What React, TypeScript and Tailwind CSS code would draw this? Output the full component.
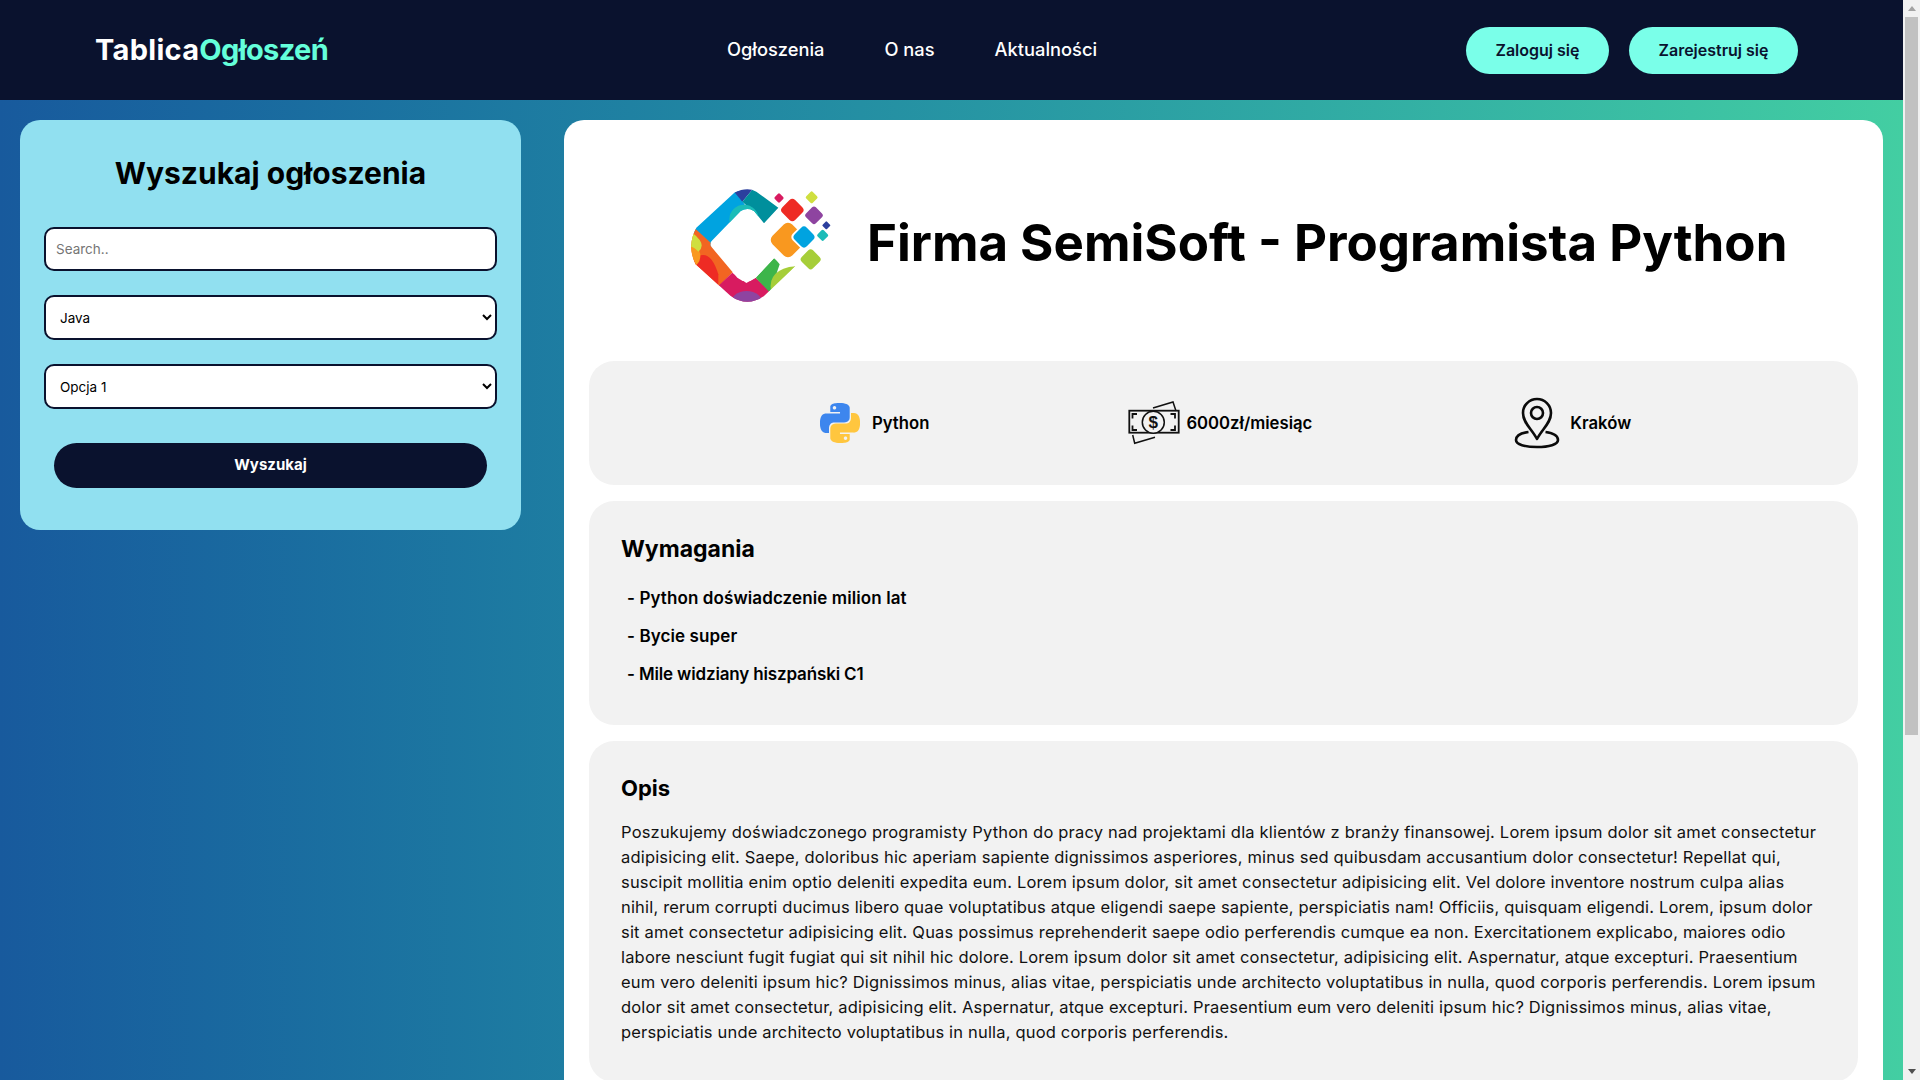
const font = { fontFamily: 'Inter, "Noto Sans", sans-serif' };

const paragraph = [
  'Poszukujemy doświadczonego programisty Python do pracy nad projektami dla klientów z branży finansowej. Lorem ipsum dolor sit amet consectetur',
  'adipisicing elit. Saepe, doloribus hic aperiam sapiente dignissimos asperiores, minus sed quibusdam accusantium dolor consectetur! Repellat qui,',
  'suscipit mollitia enim optio deleniti expedita eum. Lorem ipsum dolor, sit amet consectetur adipisicing elit. Vel dolore inventore nostrum culpa alias',
  'nihil, rerum corrupti ducimus libero quae voluptatibus atque eligendi saepe sapiente, perspiciatis nam! Officiis, quisquam eligendi. Lorem, ipsum dolor',
  'sit amet consectetur adipisicing elit. Quas possimus reprehenderit saepe odio perferendis cumque ea non. Exercitationem explicabo, maiores odio',
  'labore nesciunt fugit fugiat qui sit nihil hic dolore. Lorem ipsum dolor sit amet consectetur, adipisicing elit. Aspernatur, atque excepturi. Praesentium',
  'eum vero deleniti ipsum hic? Dignissimos minus, alias vitae, perspiciatis unde architecto voluptatibus in nulla, quod corporis perferendis. Lorem ipsum',
  'dolor sit amet consectetur, adipisicing elit. Aspernatur, atque excepturi. Praesentium eum vero deleniti ipsum hic? Dignissimos minus, alias vitae,',
  'perspiciatis unde architecto voluptatibus in nulla, quod corporis perferendis.',
];

function Diamond({ cx, cy, r, fill, rx = 6 }: { cx: number; cy: number; r: number; fill: string; rx?: number }) {
  const s = r * 1.55;
  return <rect x={cx - s / 2} y={cy - s / 2} width={s} height={s} rx={rx} fill={fill} transform={`rotate(45 ${cx} ${cy})`} />;
}

function CompanyLogo() {
  const c = 'M358 140 L292 92 Q265 76 226 95 L112 200 Q82 255 110 310 L215 405 Q265 440 315 405 L410 315 Q375 320 345 292 L290 350 Q262 372 235 350 L155 255 Q152 245 160 238 L245 150 Q265 138 285 150 L315 187 Z';
  return (
    <svg viewBox="0 0 600 480" className="w-[200px] h-[160px] shrink-0">
      <defs>
        <clipPath id="cshape">
          <path d={c} />
        </clipPath>
      </defs>
      <g clipPath="url(#cshape)">
        <polygon points="80,200 230,70 250,120 270,150 155,260" fill="#00a3e0" />
        <polygon points="215,80 285,80 250,122" fill="#2b3f9e" />
        <polygon points="250,122 285,80 370,130 315,190 270,140" fill="#008f9c" />
        <circle cx="255" cy="175" r="44" fill="#1bbcb8" />
        <polygon points="100,195 155,245 225,330 175,380 80,320" fill="#f26522" />
        <path d="M100 300 Q150 250 178 340 L178 378 L100 320 Z" fill="#ee2b24" />
        <circle cx="88" cy="285" r="36" fill="#f9981f" />
        <path d="M100 215 Q145 250 118 272 Q100 252 85 258 Z" fill="#cfdf3f" />
        <polygon points="220,335 262,366 290,350 340,395 265,445 175,377" fill="#d81b60" />
        <ellipse cx="263" cy="432" rx="50" ry="42" fill="#8e44a0" />
        <polygon points="290,350 346,290 362,310 333,395" fill="#3db54a" />
        <path d="M336 390 Q325 325 410 315 Z" fill="#a6ce39" />
      </g>
      <Diamond cx={360} cy={111} r={14} fill="#d81b60" rx={4} />
      <Diamond cx={400} cy={147} r={35} fill="#ee2b24" rx={12} />
      <Diamond cx={458} cy={109} r={18} fill="#cfdf3f" rx={5} />
      <Diamond cx={465} cy={163} r={27} fill="#8e44a0" rx={8} />
      <Diamond cx={502} cy={193} r={12} fill="#2b3f9e" rx={3} />
      <Diamond cx={491} cy={223} r={17} fill="#1bbcb8" rx={5} />
      <Diamond cx={387} cy={237} r={54} fill="#f9981f" rx={18} />
      <Diamond cx={435} cy={228} r={40} fill="#ffffff" rx={14} />
      <Diamond cx={435} cy={228} r={33} fill="#00a3e0" rx={12} />
      <Diamond cx={455} cy={295} r={31} fill="#a6ce39" rx={10} />
    </svg>
  );
}

function PythonIcon() {
  return (
    <svg viewBox="0 0 24 24" className="w-10 h-10 shrink-0" fillRule="evenodd">
      <path fill="#3d86ee" d="M14.25.18l.9.2.73.26.59.3.45.32.34.34.25.34.16.33.1.3.04.26.02.2-.01.13V8.5l-.05.63-.13.55-.21.46-.26.38-.3.31-.33.25-.35.19-.35.14-.33.1-.3.07-.26.04-.21.02H8.77l-.69.05-.59.14-.5.22-.41.27-.33.32-.27.35-.2.36-.15.37-.1.35-.07.32-.04.27-.02.21v3.06H3.17l-.21-.03-.28-.07-.32-.12-.35-.18-.36-.26-.36-.36-.35-.46-.32-.59-.28-.73-.21-.88-.14-1.05-.05-1.23.06-1.22.16-1.04.24-.87.32-.71.36-.57.4-.44.42-.33.42-.24.4-.16.36-.1.32-.05.24-.01h.16l.06.01h8.16v-.83H6.18l-.01-2.75-.02-.37.05-.34.11-.31.17-.28.25-.26.31-.23.38-.2.44-.18.51-.15.58-.12.64-.1.71-.06.77-.04.84-.02 1.27.05zM7.95 2.16l-.23.33-.08.41.08.41.23.34.33.22.41.09.41-.09.33-.22.23-.34.08-.41-.08-.41-.23-.33-.33-.22-.41-.09-.41.09z" />
      <path fill="#ffc63f" d="M21.04 6.11l.28.06.32.12.35.18.36.27.36.35.35.47.32.59.28.73.21.88.14 1.04.05 1.23-.06 1.23-.16 1.04-.24.86-.32.71-.36.57-.4.45-.42.33-.42.24-.4.16-.36.09-.32.05-.24.02-.16-.01h-8.22v.82h5.84l.01 2.76.02.36-.05.34-.11.31-.17.29-.25.25-.31.24-.38.2-.44.17-.51.15-.58.13-.64.09-.71.07-.77.04-.84.01-1.27-.04-1.07-.14-.9-.2-.73-.25-.59-.3-.45-.33-.34-.34-.25-.34-.16-.33-.1-.3-.04-.25-.02-.2.01-.13v-5.34l.05-.64.13-.54.21-.46.26-.38.3-.32.33-.24.35-.2.35-.14.33-.1.3-.06.26-.04.21-.02.13-.01h5.84l.69-.05.59-.14.5-.21.41-.28.33-.32.27-.35.2-.36.15-.36.1-.35.07-.32.04-.28.02-.21V6.07h2.09l.14.01zM14.57 20.36l-.23.33-.08.41.08.41.23.33.33.23.41.08.41-.08.33-.23.23-.33.08-.41-.08-.41-.23-.33-.33-.23-.41-.08-.41.08z" />
    </svg>
  );
}

function MoneyIcon() {
  return (
    <svg viewBox="0 0 52 46" className="w-[52px] h-[46px] shrink-0" fill="none" stroke="#111" strokeWidth="1.5">
      <path d="M25 8 L45 2 L48 11" />
      <path d="M4.7 35 L6.7 43.3 L27 37.3" />
      <rect x="1.3" y="10.7" width="49.4" height="22" strokeWidth="1.8" />
      <circle cx="25.3" cy="22.3" r="11" fill="#f2f2f2" />
      <path d="M4.5 18.5 V14 H9 M47 18.5 V14 H42.5 M4.5 25.5 V30 H9 M47 25.5 V30 H42.5" strokeWidth="1.8" />
      <text x="25.3" y="28.4" textAnchor="middle" fontSize="17" fill="#111" stroke="none" fontFamily="Liberation Sans, sans-serif">$</text>
    </svg>
  );
}

function PinIcon() {
  return (
    <svg viewBox="0 0 46 52" className="w-[46px] h-[52px] shrink-0" fill="none" stroke="#0b0b0b" strokeWidth="2.6">
      <path d="M23 42 C18 32 9 26 9 16 A14 14 0 0 1 37 16 C37 26 28 32 23 42 Z" strokeLinejoin="round" />
      <circle cx="23" cy="16" r="6" />
      <path d="M14.5 35 C7 36 2 39 2 43 C2 47.5 11 50 23 50 C35 50 44 47.5 44 43 C44 39 39 36 31.5 35" />
    </svg>
  );
}

function Scrollbar() {
  return (
    <div className="w-[17px] h-screen shrink-0 bg-[#f1f1f1] flex flex-col items-center">
      <div className="h-[17px] flex items-center justify-center">
        <div className="w-0 h-0 border-x-[4px] border-x-transparent border-b-[5px] border-b-[#a3a3a3]" />
      </div>
      <div className="w-[13px] h-[718px] bg-[#c1c1c1]" />
      <div className="flex-1" />
      <div className="h-[17px] flex items-center justify-center">
        <div className="w-0 h-0 border-x-[4px] border-x-transparent border-t-[5px] border-t-[#505050]" />
      </div>
    </div>
  );
}

export default function App() {
  return (
    <div className="flex h-screen overflow-hidden" style={font}>
      <div className="flex-1 min-w-0 h-screen overflow-hidden bg-gradient-to-r from-[#185a9d] to-[#43cea2]">
        <header className="h-[100px] bg-[#0a122e] flex items-center pl-[95px] pr-[105px]">
          <div className="w-[632px] text-[29px] font-bold text-white">
            <span className="tracking-[0.3px]">Tablica</span>
            <span className="tracking-[-0.65px] text-[#64ffda]">Ogłoszeń</span>
          </div>
          <nav className="flex gap-[60px] text-[18.3px] font-medium text-white">
            <span>Ogłoszenia</span>
            <span>O nas</span>
            <span>Aktualności</span>
          </nav>
          <div className="ml-auto flex gap-5">
            <button className="w-[143px] h-[47px] rounded-full bg-[#7affe9] text-[#0a122e] text-[16px] font-semibold">Zaloguj się</button>
            <button className="w-[169px] h-[47px] rounded-full bg-[#7affe9] text-[#0a122e] text-[16px] font-semibold">Zarejestruj się</button>
          </div>
        </header>
        <div className="flex items-start pl-5 pr-5 pt-5 gap-[43px]">
          <aside className="w-[501px] h-[410px] shrink-0 rounded-[20px] bg-[#91e0f0] px-[24px] pt-[34px]">
            <h2 className="text-[30px] leading-[38px] font-bold text-center text-black">Wyszukaj ogłoszenia</h2>
            <input
              placeholder="Search.."
              className="mt-[35px] w-full h-[44px] rounded-[10px] border-2 border-[#0a122e] bg-white px-[10px] text-[13.5px] outline-none placeholder:text-[#757575]"
            />
            <select className="mt-[24px] w-full h-[45px] rounded-[10px] border-2 border-[#0a122e] bg-white px-[10px] text-[13.5px] text-black outline-none">
              <option>Java</option>
            </select>
            <select className="mt-[24px] w-full h-[45px] rounded-[10px] border-2 border-[#0a122e] bg-white px-[10px] text-[13.5px] text-black outline-none">
              <option>Opcja 1</option>
            </select>
            <button className="mt-[34px] mx-[10px] w-[433px] h-[45px] rounded-full bg-[#0a122e] text-white text-[15px] font-bold">Wyszukaj</button>
          </aside>
          <main className="flex-1 min-w-0 h-[1100px] rounded-t-[20px] bg-white px-[25px]">
            <div className="h-[241px] flex items-center pl-[70px]">
              <CompanyLogo />
              <h1 className="ml-[8px] mt-[6px] text-[51px] font-bold whitespace-nowrap text-black">Firma SemiSoft - Programista Python</h1>
            </div>
            <section className="h-[124px] rounded-[25px] bg-[#f2f2f2] flex items-center font-semibold text-[16.7px] text-black">
              <div className="ml-[231px] flex items-center gap-3">
                <PythonIcon />
                <span className="mt-[2px]">Python</span>
              </div>
              <div className="ml-[199px] flex items-center gap-[6px]">
                <MoneyIcon />
                <span className="mt-[2px]">6000zł/miesiąc</span>
              </div>
              <div className="ml-[202px] flex items-center gap-[10px]">
                <PinIcon />
                <span className="mt-[2px]">Kraków</span>
              </div>
            </section>
            <section className="mt-4 h-[224px] rounded-[25px] bg-[#f2f2f2] px-8 pt-[32px]">
              <h3 className="text-[23px] leading-[32px] font-bold text-black">Wymagania</h3>
              <ul className="mt-[21px] ml-[6px] flex flex-col gap-[14px] text-[17px] leading-[24px] font-semibold tracking-[0.1px] text-black">
                <li>- Python doświadczenie milion lat</li>
                <li>- Bycie super</li>
                <li className="tracking-[-0.15px]">- Mile widziany hiszpański C1</li>
              </ul>
            </section>
            <section className="mt-4 h-[341px] rounded-[25px] bg-[#f2f2f2] px-8 pt-[31px]">
              <h3 className="text-[22px] leading-[32px] font-bold text-black">Opis</h3>
              <div className="mt-[16px] text-[16.5px] leading-[25px] tracking-[0.18px] text-[#111] whitespace-nowrap">
                {paragraph.map((line) => (
                  <div key={line}>{line}</div>
                ))}
              </div>
            </section>
          </main>
        </div>
      </div>
      <Scrollbar />
    </div>
  );
}
